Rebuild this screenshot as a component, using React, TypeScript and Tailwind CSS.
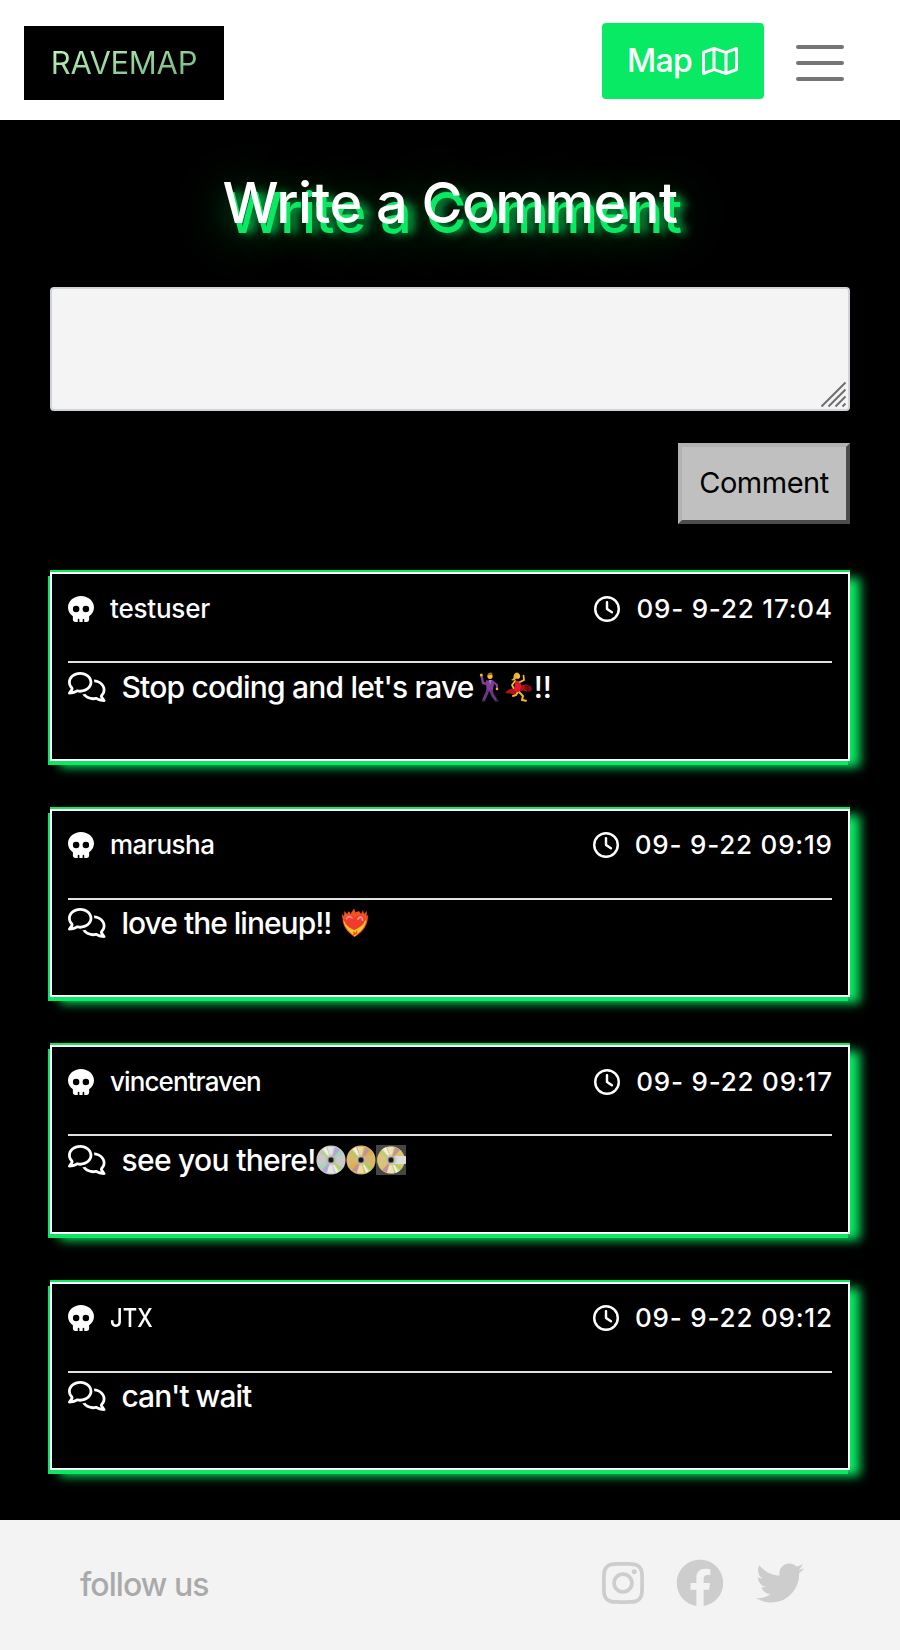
import React from "react";
import { FaFacebook, FaTwitter, FaInstagram } from "react-icons/fa";
import { FaSkull, FaRegClock, FaRegComments, FaRegMap } from "react-icons/fa6";

function ManDancing() {
  return (
    <svg viewBox="0 0 30 30" className="h-[30px] w-[30px] shrink-0" role="img" aria-label="man dancing">
      <path d="M7.500 4l1.500 7 4 1" stroke="#7d3f98" strokeWidth="2.400" fill="none" strokeLinecap="round" />
      <circle cx="7.300" cy="3" r="1.500" fill="#f6b81c" />
      <path d="M12 8.500l6.500-.5 1.500 4-1.500 8-6-1z" fill="#7d3f98" />
      <path d="M18.500 9.500l4.500 3.500v3" stroke="#7d3f98" strokeWidth="2.200" fill="none" strokeLinecap="round" />
      <circle cx="23" cy="17" r="1.300" fill="#f6b81c" />
      <path d="M14 18l-2 5-2.500 5M17 18l1.500 5 3.500 5" stroke="#6b3487" strokeWidth="3" fill="none" />
      <path d="M8 28.800h3.500M20.500 28.800h4" stroke="#263b4a" strokeWidth="1.600" />
      <circle cx="16" cy="4.300" r="2.600" fill="#f9c22c" />
      <path d="M13.300 3.500c0-3.500 5-4 5.500-1z" fill="#a26c18" />
      <path d="M15 8l1 5 1.500-5z" fill="#b47ac8" />
    </svg>
  );
}

function WomanDancing() {
  return (
    <svg viewBox="0 0 30 30" className="h-[30px] w-[30px] shrink-0" role="img" aria-label="woman dancing">
      <path d="M11 15.500L4 18l-3 3 5 .5 4 1 5-3 4-1 4 1 5-2-1-3-5-2-5 1z" fill="#b8101c" />
      <path d="M20 14l4-1 4 4-2 3-5-2z" fill="#760b16" />
      <path d="M15 20l4 4-1 4 4 .8M14 20l-2 3-3 1" stroke="#f6b81c" strokeWidth="2" fill="none" strokeLinecap="round" />
      <path d="M11.500 8.500l4.500 1 1.500 5-3 6-4.500-2z" fill="#e01b2c" />
      <path d="M11 9l-3 4 1.500 3M16 10l4-2-.5-4.500" stroke="#f9c22c" strokeWidth="1.700" fill="none" strokeLinecap="round" />
      <circle cx="13.500" cy="4.200" r="2.600" fill="#f9c22c" />
      <path d="M15 1c-4-2-5.500 2-5.500 4s-1.500 2-2.500 3c3 1.500 6-1 5.500-4z" fill="#e8b030" />
    </svg>
  );
}

function BurningHeart() {
  return (
    <svg viewBox="0 0 30 30" className="h-[30px] w-[30px] shrink-0" role="img" aria-label="heart on fire">
      <path
        d="M14.500 29C7 24 2.500 18 2.500 10L1.600 6 4 8l.5-5L7 6l2-3 1.500 3L14 .5l1.500 4L19 3l2 3 2-4 1 4 3-3-.5 5 1.300-1c1 9-4.500 17-13.300 22z"
        fill="#f4511e"
      />
      <path d="M14.500 28.500C9 23 4 19 3.500 12l3 5 3.500 3 4 2 6-4 6-6c0 7-6 12-11.500 16.500z" fill="#ffc928" />
      <path d="M14.500 22C7 18 4 15 4.500 11.500c.5-5 7-6 10-1.500 3-4.500 9.500-3 10 1.500.5 4-3 7-10 10.500z" fill="#f23b2f" />
      <path d="M6.500 11c1-3 4-3 5.500-1" stroke="#ff8a80" strokeWidth="1.600" fill="none" strokeLinecap="round" />
      <path d="M18 11c2-3 4.500-2 4.500 1" stroke="#ff9c8e" strokeWidth="1.800" fill="none" strokeLinecap="round" />
      <path d="M13 28l.5-5 2 2 1.500-3 .5 3.500z" fill="#f4511e" />
    </svg>
  );
}

type DiscProps = { base: string; a: string; b: string; c: string; cased?: boolean };

function Disc({ base, a, b, c, cased = false }: DiscProps) {
  return (
    <svg viewBox="0 0 30 30" className="h-[30px] w-[30px] shrink-0" role="img" aria-label="disc">
      {cased && <rect width="30" height="30" fill="#454648" />}
      <circle cx="15" cy="15" r={cased ? 13.8 : 14.6} fill={base} />
      <path d="M15 15L6 4.500l4-2.400zM15 15l9 10.500-4 2.400z" fill="#f3efe4" />
      <path d="M15 15l4.500-12.800 4.500 2.800zM15 15L10.500 27.800 6 25z" fill={a} />
      <path d="M15 15l9-10 3 3.500zM15 15L6 25l-3-3.500z" fill={b} opacity=".75" />
      <path d="M15 15l-3.500-13h6zM15 15l-4 12.800 7 .5z" fill={c} />
      <path d="M15 15l13.500-3v6zM15 15L1.500 12v6z" fill={base} />
      <path d="M15 15l11 8-3.500 3.500z" fill="#91d832" opacity=".6" />
      <path d="M15 15L3.500 8 7 4z" fill="#9fd45c" opacity=".4" />
      {cased && <rect x="18" y="11" width="12" height="8" rx="1" fill="#dcdddf" />}
      <circle cx="15" cy="15" r="5.500" fill="#bdb9af" opacity=".6" />
      <circle cx="15" cy="15" r="2.900" fill="#151515" stroke="#8c8a86" strokeWidth=".8" />
    </svg>
  );
}

type Comment = {
  user: string;
  userClass: string;
  date: string;
  body: React.ReactNode;
};

const comments: Comment[] = [
  {
    user: "testuser",
    userClass: "tracking-[-0.2px]",
    date: "09- 9-22 17:04",
    body: (
      <>
        <span className="tracking-[-0.8px]">Stop coding and let's rave</span>
        <ManDancing />
        <WomanDancing />
        <span>!!</span>
      </>
    ),
  },
  {
    user: "marusha",
    userClass: "tracking-[-0.5px]",
    date: "09- 9-22 09:19",
    body: (
      <>
        <span className="mr-[9px] tracking-[-1px]">love the lineup!!</span>
        <BurningHeart />
      </>
    ),
  },
  {
    user: "vincentraven",
    userClass: "tracking-[-0.9px]",
    date: "09- 9-22 09:17",
    body: (
      <>
        <span className="tracking-[-0.7px]">see you there!</span>
        <Disc base="#c9c9c9" a="#b5a5d8" b="#8edda8" c="#e4e4e4" />
        <Disc base="#d6b76c" a="#c2929c" b="#e8a83c" c="#e9dba4" />
        <Disc base="#d8c47e" a="#c2929c" b="#e3c05c" c="#ece2b8" cased />
      </>
    ),
  },
  {
    user: "JTX",
    userClass: "origin-left scale-x-85",
    date: "09- 9-22 09:12",
    body: <span className="tracking-[-1px]">can't wait</span>,
  },
];

function CommentCard({ comment }: { comment: Comment }) {
  return (
    <article className="h-[188.5px] border-2 border-white bg-black px-4 text-white shadow-[0_-2px_0_#08ea64,-2px_4px_0_#08ea64,10px_6px_10px_#08ea64]">
      <div className="flex h-[89px] items-start justify-between border-b-2 border-[#dee2e6] pt-[21.5px] text-[26px] leading-[26px] font-medium">
        <div className="flex whitespace-nowrap">
          <FaSkull className="mr-4 size-[26px]" />
          <span className={comment.userClass}>{comment.user}</span>
        </div>
        <div className="flex whitespace-nowrap">
          <FaRegClock className="mr-4 size-[26px]" />
          <span className="-mr-[0.8px] tracking-[0.8px]">{comment.date}</span>
        </div>
      </div>
      <div className="flex h-[47px] items-center whitespace-nowrap text-[30px] leading-[30px] font-medium">
        <FaRegComments className="mr-4 h-[30px] w-[37.5px] shrink-0" />
        {comment.body}
      </div>
    </article>
  );
}

export default function App() {
  return (
    <div className="min-h-[1650px] w-[900px] bg-black font-['Inter',sans-serif]">
      <header className="flex h-[120px] items-start bg-white pl-6">
        <div className="mt-[26px] flex h-[74px] w-[200px] items-center justify-center bg-black">
          <span className="bg-linear-to-br from-[#c4ffc4] to-[#6bab78] bg-clip-text text-[31px] leading-[40px] tracking-[-0.3px] text-transparent">
            RAVEMAP
          </span>
        </div>
        <button className="mt-[23px] ml-[378px] flex h-[76px] w-[162px] items-center rounded bg-[#08ea64] pl-[25px] text-[32px] font-medium text-white">
          <span className="w-[75px] text-left tracking-[-0.7px]">Map</span>
          <FaRegMap className="h-8 w-9" />
        </button>
        <button className="mt-[45px] ml-8 flex w-12 flex-col gap-3" aria-label="Menu">
          <span className="h-1 rounded-full bg-[#757575]" />
          <span className="h-1 rounded-full bg-[#757575]" />
          <span className="h-1 rounded-full bg-[#757575]" />
        </button>
      </header>

      <main className="h-[1400px] px-[50px] pt-[48px]">
        <h1 className="h-[119px] text-center text-[56px] leading-[70px] font-medium tracking-[-0.6px] whitespace-nowrap text-white [text-shadow:4px_10px_0_#08ea64,10px_10px_8px_#08ea64c0,0_10px_20px_#08ea6430,0_10px_50px_#08ea6480]">
          Write a Comment
        </h1>
        <div className="flex h-[124px] items-end justify-end rounded border-2 border-[#ced4da] bg-[#f4f4f4]">
          <svg viewBox="0 0 28 28" className="h-7 w-7" stroke="#6d6d6d" strokeWidth="1.900">
            <path d="M1.500 25.500L25.500 1.500M8.500 25.500l17-17M15.500 25.500l10-10M22.500 25.500l3-3" />
          </svg>
        </div>
        <div className="mt-8 flex justify-end">
          <button className="flex h-[81px] w-[172px] items-center justify-center border-4 border-t-[#b2b2b2] border-r-[#4c4c4c] border-b-[#4c4c4c] border-l-[#b2b2b2] bg-[#c0c0c0] pb-0.5 text-[29px] tracking-[-0.5px] text-black">
            Comment
          </button>
        </div>
        <section className="mt-12 flex flex-col gap-12">
          {comments.map((c) => (
            <CommentCard key={c.date} comment={c} />
          ))}
        </section>
      </main>

      <footer className="flex h-[130px] items-center bg-[#f3f3f3] pr-[96px] pl-20">
        <span className="text-[32px] font-medium tracking-[-0.95px] text-[#aaaaaa]">follow us</span>
        <div className="mb-1 ml-auto flex items-center">
          <FaInstagram className="mr-[29px] size-12 text-[#cdcdcd]" />
          <FaFacebook className="mr-8 size-12 text-[#cdcdcd]" />
          <FaTwitter className="size-12 text-[#cdcdcd]" />
        </div>
      </footer>
    </div>
  );
}
